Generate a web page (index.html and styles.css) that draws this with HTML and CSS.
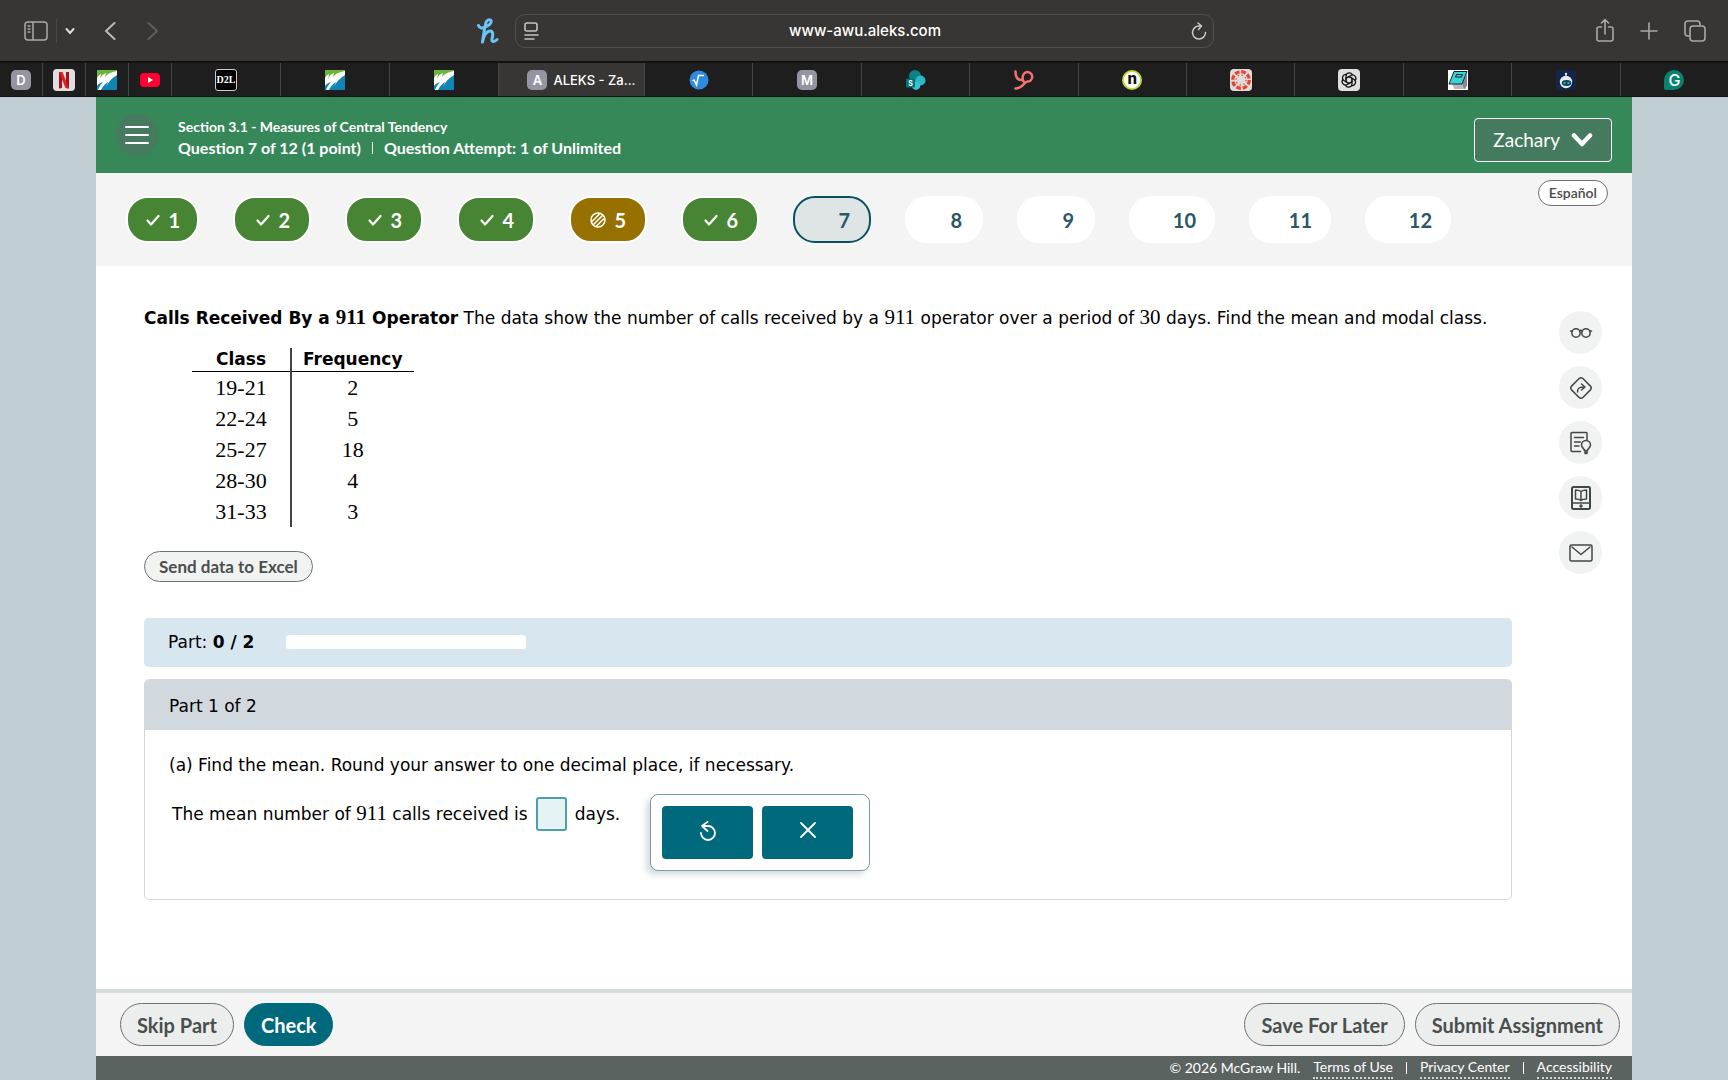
FILE: index.html
```html
<!DOCTYPE html>
<html lang="en">
<head>
<meta charset="utf-8">
<meta name="viewport" content="width=device-width, initial-scale=1">
<title>ALEKS - Zachary</title>
<link rel="stylesheet" href="styles.css">
</head>
<body>
<svg class="defs" aria-hidden="true">
  <symbol id="leaf" viewBox="0 0 20 20">
    <path fill="#fff" d="M0 0h20v20H0z"/>
    <path fill="#6db33f" d="M0 0h20v1C14 2 10 4 8 7l1-4C6 4 4 6 3 9l1-5C2 5 1 6 0 8z"/>
    <path fill="#0f84b5" d="M20 5v15H4c2-4 4-6 7-8l-2 5c2-5 6-9 11-12zM0 16v4h1c1-3 3-6 5-8-3 1-5 2-6 4z"/>
  </symbol>
  <symbol id="tick" viewBox="0 0 14 14"><path fill="none" stroke="currentColor" stroke-width="2.2" stroke-linecap="round" stroke-linejoin="round" d="M1.5 7.5l3.5 4L12.500 3"/></symbol>
</svg>

<header class="browser">
  <div class="toolbar">
    <div class="tools">
      <button class="tool" aria-label="Sidebar"><svg width="24" height="20" viewBox="0 0 24 20" fill="none" stroke="#aaa8a6" stroke-width="1.5"><rect x="1" y="1" width="22" height="18" rx="3"/><path d="M9 1v18M3.500 5h3M3.500 8h3M3.500 11h3"/></svg></button>
      <span class="divider"></span>
      <button class="tool down" aria-label="Tab groups"><svg width="10" height="8" viewBox="0 0 10 8" fill="none" stroke="#ddd" stroke-width="2" stroke-linecap="round"><path d="M1.500 2L5 6l3.500-4"/></svg></button>
      <button class="tool back" aria-label="Back"><svg width="12" height="20" viewBox="0 0 12 20" fill="none" stroke="#bcbab8" stroke-width="2" stroke-linecap="round" stroke-linejoin="round"><path d="M10.500 2L2 10l8.500 8"/></svg></button>
      <button class="tool next" aria-label="Forward"><svg width="12" height="20" viewBox="0 0 12 20" fill="none" stroke="#605e5c" stroke-width="2" stroke-linecap="round" stroke-linejoin="round"><path d="M1.500 2L10 10l-8.500 8"/></svg></button>
      <button class="tool honey" aria-label="Honey"><svg width="22" height="26" viewBox="0 0 22 26" fill="none" stroke="#6cc4f5" stroke-width="3" stroke-linecap="round" stroke-linejoin="round"><path d="M1.500 7.500c1 3 4 3 7 1.500 4-2 6.500-4 5.500-6.500-1-1.500-4-1-5 2C7.500 9 6.500 18 5.500 24c1-6 4-11 7.500-11s3 4 2 8c-.5 3 2 3.500 5 .5"/></svg></button>
    </div>
    <div class="address">
      <button class="tool" aria-label="Page menu"><svg width="18" height="18" viewBox="0 0 18 18" fill="none" stroke="#c4c2c0" stroke-width="1.600" stroke-linecap="round"><rect x="3" y="1" width="12" height="8" rx="2"/><path d="M3 13h13M3 17h9"/></svg></button>
      <input class="url" type="text" value="www-awu.aleks.com" aria-label="Address">
      <button class="tool" aria-label="Reload"><svg width="16" height="18" viewBox="0 0 16 18" fill="none" stroke="#cfcdcb" stroke-width="1.500" stroke-linecap="round" stroke-linejoin="round"><path d="M8.500 4A6.500 6.500 0 1 0 14.500 10.500M7 1l3.500 3L7.500 7.500"/></svg></button>
    </div>
    <div class="tools tools-end">
      <button class="tool" aria-label="Share"><svg width="18" height="26" viewBox="0 0 18 26" fill="none" stroke="#aaa8a6" stroke-width="1.600" stroke-linecap="round" stroke-linejoin="round"><path d="M5.500 9H3a2 2 0 0 0-2 2v10a2 2 0 0 0 2 2h12a2 2 0 0 0 2-2V11a2 2 0 0 0-2-2h-2.500M9 16V2M5.500 5L9 1.500 12.500 5"/></svg></button>
      <button class="tool" aria-label="New tab"><svg width="18" height="18" viewBox="0 0 18 18" fill="none" stroke="#aaa8a6" stroke-width="1.600" stroke-linecap="round"><path d="M9 1v16M1 9h16"/></svg></button>
      <button class="tool" aria-label="Tab overview"><svg width="22" height="22" viewBox="0 0 22 22" fill="none" stroke="#aaa8a6" stroke-width="1.600" stroke-linejoin="round"><rect x="6" y="6" width="15" height="15" rx="3"/><path d="M6 16H4a3 3 0 0 1-3-3V4a3 3 0 0 1 3-3h9a3 3 0 0 1 3 3v2"/></svg></button>
    </div>
  </div>
  <nav class="tabs" aria-label="Tabs">
    <div class="tab pinned"><span class="letter">D</span></div>
    <div class="tab pinned"><svg width="22" height="22" viewBox="0 0 22 22"><rect width="22" height="22" rx="4" fill="#dfdfdf"/><path fill="#a5121a" d="M6 3h3v16l-3 .5zM13 3h3v16.500L13 19z"/><path fill="#e01b22" d="M6 3h3.500L16 19.500l-3.500-.5z"/></svg></div>
    <div class="tab pinned"><svg width="20" height="20"><use href="#leaf"/></svg></div>
    <div class="tab pinned"><svg width="20" height="14" viewBox="0 0 20 14"><rect width="20" height="14" rx="4" fill="#ff0033"/><path fill="#fff" d="M8 4v6l5-3z"/></svg></div>
    <div class="tab lead"><span class="d2l">D2L</span></div>
    <div class="tab lead"><svg width="20" height="20"><use href="#leaf"/></svg></div>
    <div class="tab lead"><svg width="20" height="20"><use href="#leaf"/></svg></div>
    <div class="tab active"><span class="letter">A</span><span>ALEKS - Za...</span></div>
    <div class="tab"><svg width="20" height="20" viewBox="0 0 20 20"><circle cx="10" cy="10" r="9.500" fill="#2f8be0"/><path fill="none" stroke="#fff" stroke-width="1.500" d="M3.500 11l1.500-1 2.500 5L9.500 5.500H15"/></svg></div>
    <div class="tab"><span class="letter">M</span></div>
    <div class="tab"><svg width="20" height="20" viewBox="0 0 20 20"><circle cx="9" cy="6" r="6" fill="#0b8288"/><circle cx="14.500" cy="10.500" r="5" fill="#29b8c4"/><circle cx="10" cy="15.500" r="4.300" fill="#37c6d0"/><rect y="8.500" width="9" height="9" rx="1" fill="#04737b"/><text x="4.500" y="15.500" fill="#fff" font-size="7" font-family="Inter, sans-serif" font-weight="700" text-anchor="middle">S</text></svg></div>
    <div class="tab"><svg width="20" height="20" viewBox="0 0 20 20" fill="none" stroke="#f2736d" stroke-width="2.500" stroke-linecap="round"><path d="M1.500 1.500c0 6 2 8.500 6 8.500M9 5.500a4.700 4.700 0 1 1 4.500 6C9 12 10 18 1.500 18.500M9 5.500c-1 4-.5 5 1 6.500"/></svg></div>
    <div class="tab"><span class="round-n">n</span></div>
    <div class="tab"><svg width="22" height="22" viewBox="0 0 22 22"><rect width="22" height="22" rx="4" fill="#dedbd9"/><circle cx="11" cy="11" r="8.300" fill="none" stroke="#e8432f" stroke-width="3.200" stroke-dasharray="4.700 1.819"/><circle cx="11" cy="11" r="5" fill="none" stroke="#e8432f" stroke-width="1.300" stroke-dasharray="1.300 2.627"/></svg></div>
    <div class="tab"><svg width="22" height="22" viewBox="0 0 22 22"><rect width="22" height="22" rx="4" fill="#dfdfdf"/><g fill="none" stroke="#111" stroke-width="1.200"><path d="M11 7.500l3 1.800v5.500c0 4-5.500 4.500-6.500 1.200"/><path d="M11 7.500l3 1.800v5.500c0 4-5.500 4.500-6.500 1.200" transform="rotate(60 11 11)"/><path d="M11 7.500l3 1.800v5.500c0 4-5.500 4.500-6.500 1.200" transform="rotate(120 11 11)"/><path d="M11 7.500l3 1.800v5.500c0 4-5.500 4.500-6.500 1.200" transform="rotate(180 11 11)"/><path d="M11 7.500l3 1.800v5.500c0 4-5.500 4.500-6.500 1.200" transform="rotate(240 11 11)"/><path d="M11 7.500l3 1.800v5.500c0 4-5.500 4.500-6.500 1.200" transform="rotate(300 11 11)"/></g></svg></div>
    <div class="tab"><svg width="20" height="20" viewBox="0 0 20 20"><path fill="#fff" d="M0 0h20v20H0z"/><path fill="#bbb" d="M4 13h14v6H6z"/><path fill="#888" d="M14 13l5-9v12l-3 3z"/><path fill="#3dd3d6" stroke="#123" stroke-width="1" d="M6 1.500h13L14 14H1z"/><path fill="none" stroke="#123" d="M8.500 4.500h6L13.500 7h-6z"/></svg></div>
    <div class="tab"><svg width="20" height="20" viewBox="0 0 20 20"><rect width="20" height="20" rx="3" fill="#14254a"/><circle cx="10" cy="4" r="1.200" fill="#dfe6ee"/><path stroke="#dfe6ee" d="M10 4v4"/><circle cx="10" cy="12" r="6.200" fill="#e6ecf2"/><ellipse cx="10.500" cy="13" rx="4.800" ry="3" fill="#12435a"/><path stroke="#36d0d8" stroke-width="1.300" d="M7.500 13h2M11.500 13h2"/></svg></div>
    <div class="tab"><span class="gram">G</span></div>
  </nav>
</header>

<div class="page">
  <div class="sheet">
    <header class="banner">
      <button class="menu" aria-label="Menu"><svg width="24" height="20" viewBox="0 0 24 20" stroke="#fff" stroke-width="2" stroke-linecap="round"><path d="M1 2h22M1 10h22M1 18h22"/></svg></button>
      <div class="titles">
        <div class="section">Section 3.1 - Measures of Central Tendency</div>
        <div class="attempt"><span>Question 7 of 12 (1 point)</span><span class="bar"></span><span>Question Attempt: 1 of Unlimited</span></div>
      </div>
      <button class="user">Zachary<svg width="22" height="16" viewBox="0 0 22 16" fill="none" stroke="#fff" stroke-width="4.500" stroke-linecap="round" stroke-linejoin="round"><path d="M3 3.500l8 8.500 8-8.500"/></svg></button>
    </header>

    <div class="strip">
      <nav class="pills" aria-label="Questions">
        <button class="pill done narrow"><svg width="14" height="14"><use href="#tick"/></svg>1</button>
        <button class="pill done"><svg width="14" height="14"><use href="#tick"/></svg>2</button>
        <button class="pill done"><svg width="14" height="14"><use href="#tick"/></svg>3</button>
        <button class="pill done"><svg width="14" height="14"><use href="#tick"/></svg>4</button>
        <button class="pill partial"><svg width="16" height="16" viewBox="0 0 16 16" fill="none" stroke="#fff" stroke-width="1.500"><circle cx="8" cy="8" r="7"/><path d="M2 9.500L9.500 2M3 13L13 3M6.500 14L14 6.500"/></svg>5</button>
        <button class="pill done"><svg width="14" height="14"><use href="#tick"/></svg>6</button>
        <button class="pill current">7</button>
        <button class="pill">8</button>
        <button class="pill">9</button>
        <button class="pill wide">10</button>
        <button class="pill medium">11</button>
        <button class="pill wide">12</button>
      </nav>
      <button class="language">Español</button>
    </div>

    <main class="work">
      <div class="problem">
        <p class="prompt"><b>Calls Received By a <span class="math">911</span> Operator</b> The data show the number of calls received by a <span class="math">911</span> operator over a period of <span class="math">30</span> days. Find the mean and modal class.</p>
        <table class="data">
          <thead><tr><th>Class</th><th>Frequency</th></tr></thead>
          <tbody>
            <tr><td>19-21</td><td>2</td></tr>
            <tr><td>22-24</td><td>5</td></tr>
            <tr><td>25-27</td><td>18</td></tr>
            <tr><td>28-30</td><td>4</td></tr>
            <tr><td>31-33</td><td>3</td></tr>
          </tbody>
        </table>
        <button class="excel">Send data to Excel</button>
        <div class="progress"><span>Part: <b>0 / 2</b></span><span class="track"></span></div>
        <section class="part">
          <h2 class="part-title">Part 1 of 2</h2>
          <div class="part-body">
            <p class="line">(a) Find the mean. Round your answer to one decimal place, if necessary.</p>
            <div class="answer">
              <label for="mean">The mean number of <span class="math">911</span> calls received is</label>
              <input class="blank" id="mean" type="text">
              <span>days.</span>
              <div class="keypad">
                <button class="key" aria-label="Undo"><svg width="18" height="22" viewBox="0 0 18 22" fill="none" stroke="#fff" stroke-width="1.800" stroke-linecap="round" stroke-linejoin="round"><path d="M2 12a7 7 0 1 0 7-7H3M8.500 .9L3 5l5.500 5"/></svg></button>
                <button class="key" aria-label="Clear"><svg width="18" height="22" viewBox="0 0 18 22" fill="none" stroke="#fff" stroke-width="1.800" stroke-linecap="round"><path d="M2 2l14 14M16 2L2 16"/></svg></button>
              </div>
            </div>
          </div>
        </section>
      </div>
      <aside class="helpers">
        <button class="helper" aria-label="Read"><svg width="24" height="24" viewBox="0 0 24 24"><circle cx="7" cy="12" r="4.200"/><circle cx="17" cy="12" r="4.200"/><path d="M1.500 10l2 0M22.500 10h-2M10.500 10q1.500-1.500 3 0"/></svg></button>
        <button class="helper" aria-label="Directions"><svg width="24" height="24" viewBox="0 0 24 24"><rect x="4" y="4" width="16" height="16" rx="3" transform="rotate(45 12 12)"/><path d="M8.500 16c0-4 2-5 7-5M12.500 8l3.500 3-3.500 3"/></svg></button>
        <button class="helper" aria-label="Hint"><svg width="24" height="24" viewBox="0 0 24 24"><path d="M11.500 20.500H3a1 1 0 0 1-1-1V2.500a1 1 0 0 1 1-1h14a1 1 0 0 1 1 1V9M5.500 6.500h9M5.500 11h6M5.500 15h4.500"/><path d="M15.500 19.500c0-2-3-2.500-3-5.500a4.500 4.500 0 0 1 9 0c0 3-3 3.500-3 5.500z"/><path d="M15.500 21h3M16 22.500h2"/></svg></button>
        <button class="helper" aria-label="eBook"><svg width="24" height="24" viewBox="0 0 24 24"><rect x="3" y="1" width="18" height="22" rx="1.500" stroke-width="2"/><path d="M3 17h18M12 5.500C10 4 8 4 6.500 4v9c2 0 4 0 5.500 1.500 1.500-1.500 3.500-1.500 5.500-1.500V4C16 4 14 4 12 5.500zM12 5.500v8.500"/><circle cx="12" cy="20" r="1"/></svg></button>
        <button class="helper" aria-label="Message"><svg width="24" height="24" viewBox="0 0 24 24"><rect x="1" y="4" width="22" height="16" rx="1.500"/><path d="M3 6l9 7.500L21 6"/></svg></button>
      </aside>
    </main>

    <div class="actions">
      <button class="action">Skip Part</button>
      <button class="action primary">Check</button>
      <button class="action push">Save For Later</button>
      <button class="action">Submit Assignment</button>
    </div>
    <footer class="legal">
      <span>© 2026 McGraw Hill.</span>
      <a href="#terms">Terms of Use</a><span class="bar"></span><a href="#privacy">Privacy Center</a><span class="bar"></span><a href="#accessibility">Accessibility</a>
    </footer>
  </div>
</div>
</body>
</html>
```
FILE: styles.css
```css
* { box-sizing: border-box; }

body {
  margin: 0;
  min-height: 100vh;
  display: flex;
  flex-direction: column;
  background: #c1ced3;
  color: #000;
  font: 17px/24px "DejaVu Sans", Verdana, sans-serif;
}

button {
  margin: 0;
  padding: 0;
  border: 0;
  background: none;
  color: inherit;
  font: inherit;
  white-space: nowrap;
}

svg { display: block; flex: none; }
.defs { position: absolute; width: 0; height: 0; }
p, h2 { margin: 0; }

/* Browser chrome */
.browser { background: #383634; color: #fff; font: 500 14px/20px Inter, sans-serif; }

.toolbar {
  display: grid;
  grid-template-columns: 1fr minmax(300px, 699px) 1fr;
  align-items: center;
  height: 61px;
}

.tools { display: flex; align-items: center; padding: 0 16px 0 24px; }
.tools-end { justify-content: flex-end; gap: 26px; padding: 0 22px; }
.tool { display: flex; }
.divider { width: 1px; height: 24px; margin: 0 8px; background: #4a4846; }
.back { margin-left: 29px; }
.next { margin-left: 31px; }
.honey { margin-left: auto; }

.address {
  display: flex;
  align-items: center;
  height: 34px;
  padding: 0 6px;
  border: 1px solid #52504e;
  border-radius: 10px;
}

.url {
  flex: 1;
  min-width: 0;
  border: 0;
  background: none;
  color: #fff;
  font: 500 15px/20px Inter, sans-serif;
  text-align: center;
}

.tabs { display: flex; height: 36px; border-top: 2px solid #111; border-bottom: 1px solid #111; background: #1e1e1e; }

.tab {
  flex: 1;
  display: flex;
  align-items: center;
  justify-content: center;
  gap: 6px;
  min-width: 0;
  border-right: 1px solid #454545;
  white-space: nowrap;
}

.tab:last-child { border-right: 0; }
.pinned { flex: 0 0 43px; }
.lead { flex: 0 1 109px; }
.active { flex: 0 0 146px; padding-left: 20px; background: #383634; font-size: 13px; }

.letter, .d2l, .round-n, .gram { width: 20px; height: 20px; line-height: 20px; text-align: center; }
.letter { border-radius: 5px; background: #9594a3; font-weight: 600; font-size: 13px; }
.d2l { width: 22px; height: 22px; border: 1px solid #ccc; border-radius: 3px; background: #000; font: 700 10px/20px "Liberation Serif", serif; }
.round-n { border: 2px solid #c3d93c; border-radius: 10px; background: #fff; color: #111; font: 800 15px/14px Inter, sans-serif; }
.gram { border-radius: 10px 10px 10px 2px; background: #08826f; font-size: 16px; }

/* Page */
.page { flex: 1; display: flex; padding: 0 96px; }
.sheet { flex: 1; min-width: 0; display: flex; flex-direction: column; background: #fff; }

.banner {
  display: flex;
  align-items: flex-start;
  height: 76px;
  padding: 17px 20px 0;
  background: #378859;
  color: #fff;
  font-family: Lato, sans-serif;
}

.menu { display: flex; align-items: center; justify-content: center; width: 42px; height: 42px; border-radius: 21px; background: #477a5f; }
.titles { margin-left: 20px; padding-top: 3px; font-weight: 700; }
.section { font-size: 14px; line-height: 20px; }
.attempt { display: flex; align-items: center; gap: 11px; font-size: 16px; line-height: 22px; }
.bar { width: 1px; height: 12px; background: currentColor; }

.user {
  display: flex;
  align-items: center;
  gap: 11px;
  height: 44px;
  margin: 4px 0 0 auto;
  padding: 0 18px;
  border: 1px solid #fff;
  border-radius: 4px;
  background: #447b5f;
  font-size: 19px;
}

.strip { display: flex; justify-content: space-between; align-items: flex-start; height: 93px; padding: 0 24px 0 30px; background: #f4f4f4; font-family: Lato, sans-serif; }
.pills { display: flex; gap: 34px; padding-top: 23px; }

.pill {
  display: flex;
  align-items: center;
  justify-content: flex-end;
  gap: 8px;
  width: 78px;
  height: 47px;
  padding-right: 19px;
  border: 2px solid #fff;
  border-radius: 22px;
  background: #fff;
  color: #285868;
  font-size: 20px;
  font-weight: 700;
}

.narrow, .medium, .wide { padding-right: 17px; }
.narrow { width: 73px; }
.medium { width: 82px; }
.wide { width: 86px; }
.done { background: #478434; color: #fff; }
.partial { background: #977100; color: #fff; }
.current { border-color: #07515f; background: #dfe4e5; }

.language {
  height: 26px;
  margin-top: 7px;
  padding: 0 10px;
  border: 1px solid #6c7270;
  border-radius: 13px;
  background: #fff;
  color: #464c4a;
  font-size: 14px;
  font-weight: 600;
}

.work { flex: 1; display: flex; gap: 47px; padding: 39px 30px 60px 48px; }
.problem { flex: 1; min-width: 0; }
.math { font-family: "Liberation Serif", "Times New Roman", serif; font-size: 21px; line-height: 24px; }

.data { margin: 18px 0 24px 48px; border-collapse: collapse; text-align: center; }
.data th { height: 23px; padding: 0 11px; border-bottom: 1px solid #000; line-height: 22px; }
.data td { height: 31px; padding: 0; font: 22px/31px "Liberation Serif", serif; }
.data th:first-child { width: 99px; }
.data th:last-child { width: 122px; }
.data tr > :first-child { border-right: 2px solid #444; }

.excel {
  display: block;
  height: 31px;
  padding: 0 14px;
  border: 1px solid #6c7270;
  border-radius: 16px;
  background: #f1f3f2;
  color: #4a4f4e;
  font: 700 17px/27px Lato, sans-serif;
}

.progress { display: flex; align-items: center; gap: 32px; height: 49px; margin-top: 36px; padding: 0 24px; border-radius: 5px; background: #d8e6ef; }
.track { width: 240px; height: 14px; border-radius: 3px; background: #fff; }

.part { margin-top: 12px; border: 1px solid #d3d8da; border-radius: 5px; overflow: hidden; }
.part-title { padding: 14px 24px 12px; background: #d1d9de; font-size: 17px; font-weight: 400; line-height: 24px; }
.part-body { padding: 23px 24px 28px; }
.answer { display: flex; align-items: flex-start; margin-top: 17px; padding-left: 3px; line-height: 40px; }
.answer .math { line-height: 24px; }
.blank { width: 31px; height: 34px; margin: 3px 8px; padding: 0 4px; border: 2px solid #4d9fac; border-radius: 3px; background: #e5f3f5; font: inherit; }

.keypad {
  display: flex;
  gap: 9px;
  margin-left: 30px;
  padding: 11px 16px 11px 11px;
  border: 1px solid #7d9da6;
  border-radius: 8px;
  background: #fff;
  box-shadow: -4px 4px 6px #d5dde2;
}

.key { display: flex; align-items: center; justify-content: center; width: 91px; height: 53px; border-radius: 4px; background: #006a7c; }

.helpers { display: flex; flex-direction: column; gap: 12px; padding-top: 6px; }
.helper { display: flex; align-items: center; justify-content: center; width: 43px; height: 43px; border-radius: 22px; background: #f1f2f2; }
.helper svg { fill: none; stroke: #404846; stroke-width: 1.5; stroke-linecap: round; stroke-linejoin: round; }

.actions { display: flex; gap: 10px; height: 67px; padding: 10px 12px 0 24px; border-top: 4px solid #d5dddb; background: #f4f4f4; }

.action {
  height: 43px;
  padding: 0 16px;
  border: 1px solid #6c7270;
  border-radius: 22px;
  background: #ebeeed;
  color: #4a4f4e;
  font: 700 20px/24px Lato, sans-serif;
}

.primary { border-color: #006a7c; background: #006a7c; color: #fff; }
.push { margin-left: auto; }

.legal { display: flex; align-items: center; justify-content: flex-end; gap: 13px; height: 24px; padding: 0 20px; background: #5b6361; color: #fff; font: 14px/20px Lato, sans-serif; }
.legal a { border-bottom: 2px dotted #d0d4d3; color: inherit; text-decoration: none; }
```
